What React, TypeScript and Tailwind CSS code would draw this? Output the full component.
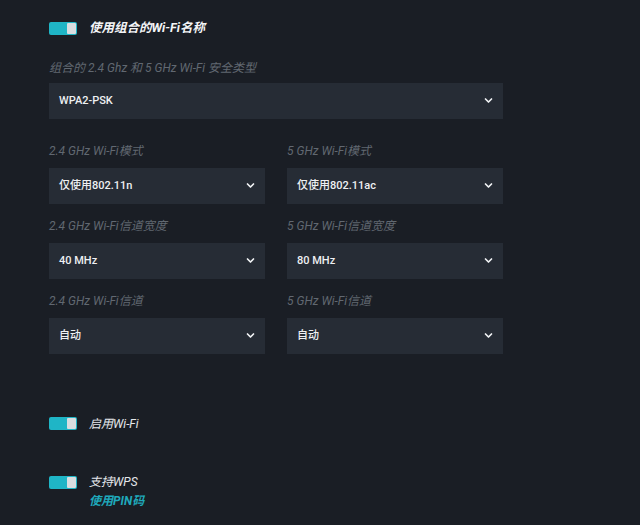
import React from 'react';

function Toggle() {
  return (
    <div className="flex h-[13px] w-[28px] shrink-0 items-stretch rounded-[2px] bg-[#1fb5c6] p-[1px]">
      <div className="flex-1" />
      <div className="w-[9px] rounded-[1px] bg-[#d9dde0]" />
    </div>
  );
}

function Chevron() {
  return (
    <svg width="9" height="7" viewBox="0 0 9 7" fill="none">
      <path d="M1.5 2 L4.5 5 L7.5 2" stroke="#f1f3f5" strokeWidth="1.7" strokeLinecap="round" strokeLinejoin="round" />
    </svg>
  );
}

function Select({ value }: { value: string }) {
  return (
    <div className="flex h-[36px] items-center justify-between bg-[#262c35] pl-[10px] pr-[10px]">
      <span className="text-[11px] font-medium text-[#eef0f2]">{value}</span>
      <Chevron />
    </div>
  );
}

function Field({ label, value }: { label: string; value: string }) {
  return (
    <div className="flex flex-col">
      <div className="mb-[9px] text-[12px] italic leading-[16px] text-[#616871]">{label}</div>
      <Select value={value} />
    </div>
  );
}

export default function App() {
  return (
    <div
      className="h-[525px] w-[640px] overflow-hidden bg-[#1a1e25] pl-[49px]"
      style={{ fontFamily: 'Roboto, "Noto Sans CJK SC", sans-serif' }}
    >
      <div className="flex items-center gap-[12px] pt-[19px]">
        <Toggle />
        <span className="text-[12.5px] font-bold italic text-[#f3f4f6]">使用组合的Wi-Fi名称</span>
      </div>

      <div className="mt-[22px] w-[454px]">
        <div className="mb-[7px] text-[12px] italic leading-[16px] text-[#616871]">组合的 2.4 Ghz 和 5 GHz Wi-Fi 安全类型</div>
        <Select value="WPA2-PSK" />
      </div>

      <div className="mt-[24px] grid w-[454px] grid-cols-2 gap-x-[22px] gap-y-[14px]">
        <Field label="2.4 GHz Wi-Fi模式" value="仅使用802.11n" />
        <Field label="5 GHz Wi-Fi模式" value="仅使用802.11ac" />
        <Field label="2.4 GHz Wi-Fi信道宽度" value="40 MHz" />
        <Field label="5 GHz Wi-Fi信道宽度" value="80 MHz" />
        <Field label="2.4 GHz Wi-Fi信道" value="自动" />
        <Field label="5 GHz Wi-Fi信道" value="自动" />
      </div>

      <div className="mt-[61px] flex items-center gap-[12px]">
        <Toggle />
        <span className="text-[12px] italic text-[#e5e7eb]">启用Wi-Fi</span>
      </div>

      <div className="mt-[41px] flex items-start gap-[12px]">
        <div className="pt-[2px]">
          <Toggle />
        </div>
        <div className="flex flex-col">
          <span className="text-[12px] italic leading-[16px] text-[#e5e7eb]">支持WPS</span>
          <span className="mt-[3px] text-[12px] font-bold italic leading-[16px] text-[#1fa9bb]">使用PIN码</span>
        </div>
      </div>
    </div>
  );
}
